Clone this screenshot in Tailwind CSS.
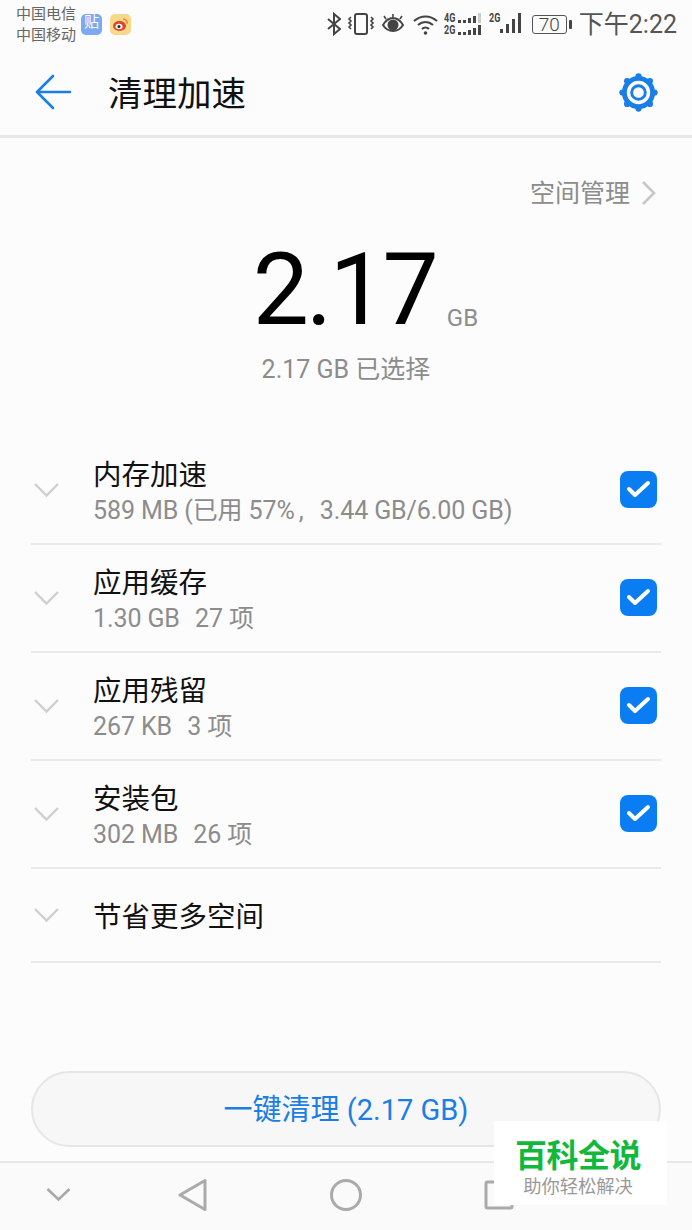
<!DOCTYPE html>
<html lang="zh-CN">
<head>
    <meta charset="UTF-8">
    <meta name="viewport" content="width=device-width, initial-scale=1.0">
    <title>清理加速</title>
    <script src="https://cdn.jsdelivr.net/npm/@tailwindcss/browser@4"></script>
</head>
<body class="bg-[#fcfcfc] font-['Roboto','Noto_Sans_CJK_SC',sans-serif]">
<div class="relative w-[692px] h-[1230px] overflow-hidden flex flex-col">

    <!-- Status bar -->
    <div class="h-[48px] flex items-center pl-[16px] pr-[15px] text-[#555]">
        <div class="text-[15px] leading-[21px] text-[#666] w-[61px] whitespace-nowrap mt-[2px]">
            <div>中国电信</div>
            <div>中国移动</div>
        </div>
        <div class="ml-[4px] w-[21px] h-[21px] rounded-[5px] bg-[#7ba9f2] flex items-center justify-center text-white text-[15px] leading-none pb-[3px]">贴</div>
        <div class="ml-[8px] w-[21px] h-[21px] rounded-[5px] bg-[#f8d98a] flex items-center justify-center">
            <svg width="17" height="15" viewBox="0 0 17 15"><ellipse cx="7.5" cy="9" rx="6.5" ry="5" fill="#e0432e"/><ellipse cx="7" cy="9.5" rx="3.5" ry="2.8" fill="#fff"/><circle cx="7" cy="9.5" r="1.5" fill="#222"/><path d="M11 2a4 4 0 0 1 4 5" fill="none" stroke="#e98a2e" stroke-width="1.5"/></svg>
        </div>
        <div class="ml-auto flex items-center">
            <svg width="14" height="24" viewBox="0 0 14 24" fill="none" stroke="#444" stroke-width="2"><path d="M1 7l12 10-6 5V2l6 5L1 17"/></svg>
            <svg class="ml-[4px]" width="31" height="24" viewBox="0 0 31 24" fill="none" stroke="#444" stroke-width="2"><rect x="10" y="2" width="12" height="20" rx="2"/><path d="M6 5L4 7l2 2-2 2 2 2-2 2 2 2M26 5l2 2-2 2 2 2-2 2 2 2-2 2" stroke-width="1.6"/></svg>
            <svg class="ml-[5px]" width="24" height="24" viewBox="0 0 24 24" fill="none" stroke="#444" stroke-width="2"><path d="M2 13c3-5 6-7 10-7s7 2 10 7c-3 5-6 6-10 6s-7-1-10-6z"/><circle cx="12" cy="13" r="4.5" fill="#444"/><path d="M5 7L3 4M12 5V2M19 7l2-3" stroke-width="1.6"/></svg>
            <svg class="ml-[8px]" width="25" height="22" viewBox="0 0 25 22" fill="none" stroke="#444" stroke-width="2.2"><path d="M1 8c7-6 16-6 23 0M5 12c4.500-4 10.500-4 15 0M9 16c2-2 5-2 7 0"/><circle cx="12.500" cy="20" r="1.800" fill="#444" stroke="none"/></svg>
            <div class="ml-[6px] flex flex-col gap-[2px] text-[12px] leading-[10px] font-bold text-[#444] w-[38px]">
                <div class="flex items-center"><span class="scale-x-75 origin-left w-[12px]">4G</span><svg class="ml-[2px]" width="24" height="10" viewBox="0 0 24 10" fill="#444"><rect x="0" y="7" width="3" height="3"/><rect x="5" y="7" width="3" height="3"/><rect x="10" y="5" width="3" height="5"/><rect x="15" y="3" width="3" height="7"/><rect x="20" y="0" width="3" height="10" fill="#ccc"/></svg></div>
                <div class="flex items-center"><span class="scale-x-75 origin-left w-[12px]">2G</span><svg class="ml-[2px]" width="24" height="10" viewBox="0 0 24 10" fill="#444"><rect x="0" y="7" width="3" height="3"/><rect x="5" y="7" width="3" height="3"/><rect x="10" y="5" width="3" height="5"/><rect x="15" y="3" width="3" height="7"/><rect x="20" y="0" width="3" height="10"/></svg></div>
            </div>
            <div class="ml-[7px] relative w-[34px] h-[24px]">
                <span class="absolute left-0 top-[1px] scale-x-75 origin-left text-[12px] leading-[10px] font-bold text-[#444]">2G</span>
                <svg class="absolute left-[11px] top-[1px]" width="23" height="21" viewBox="0 0 23 21" fill="#444"><rect x="0" y="16" width="3" height="4"/><rect x="6" y="11" width="3" height="9"/><rect x="12" y="6" width="3" height="14"/><rect x="18" y="0" width="3" height="20"/></svg>
            </div>
            <div class="ml-[9px] flex items-center">
                <div class="w-[35px] h-[19px] border border-[#555] rounded-[3px] flex items-center justify-center text-[19px] leading-none text-[#444] font-light">70</div>
                <div class="ml-[2px] w-[3px] h-[9px] bg-[#444] rounded-[1px]"></div>
            </div>
            <div class="ml-[7px] text-[25px] leading-none text-[#555]">下午2:22</div>
        </div>
    </div>

    <!-- Action bar -->
    <div class="h-[90px] flex items-center border-b-[3px] border-[#e8e8e8] pl-[35px] pr-[34px]">
        <svg width="37" height="36" viewBox="0 0 37 36" fill="none" stroke="#1a7ee6" stroke-width="2.6" stroke-linecap="round" stroke-linejoin="round"><path d="M35 18H2M18 2L2 18l16 16"/></svg>
        <h1 class="ml-[36px] text-[34.5px] leading-none font-normal text-[#111] mt-[5px]">清理加速</h1>
        <svg class="ml-auto mt-[1px]" width="39" height="39" viewBox="0 0 40 40" fill="none"><circle cx="20" cy="20" r="14.500" stroke="#1a7ee6" stroke-width="5"/><circle cx="20" cy="20" r="7" stroke="#1a7ee6" stroke-width="3"/><g fill="#1a7ee6"><circle cx="20" cy="3.500" r="3.200"/><circle cx="20" cy="36.500" r="3.200"/><circle cx="3.500" cy="20" r="3.200"/><circle cx="36.500" cy="20" r="3.200"/><circle cx="8.300" cy="8.300" r="3.200"/><circle cx="31.700" cy="8.300" r="3.200"/><circle cx="8.300" cy="31.700" r="3.200"/><circle cx="31.700" cy="31.700" r="3.200"/></g></svg>
    </div>

    <!-- Storage link -->
    <div class="mt-[38px] h-[34px] flex items-center justify-end pr-[35px] text-[25px] leading-none text-[#8c8c8c]">
        <span>空间管理</span>
        <svg class="ml-[11px]" width="16" height="26" viewBox="0 0 16 26" fill="none" stroke="#c8c8c8" stroke-width="2.600"><path d="M2 2l11 11L2 24"/></svg>
    </div>

    <!-- Total -->
    <div class="mt-[22px] flex items-end justify-center h-[116px] pl-[39px]">
        <span class="text-[100px] leading-[116px] text-black tracking-[-3px]">2.17</span>
        <span class="ml-[11px] mb-[16px] text-[24px] leading-[28px] text-[#8c8c8c]">GB</span>
    </div>
    <div class="mt-[6px] text-center text-[25px] leading-[32px] text-[#8c8c8c]">2.17 GB 已选择</div>

    <!-- Items -->
    <div class="mt-[51px] mx-[31px]">
        <div class="h-[108px] flex items-center border-b-2 border-[#eaeaea]">
            <svg class="ml-[3px] -mt-[1px]" width="25" height="16" viewBox="0 0 25 16" fill="none" stroke="#cfcfcf" stroke-width="2.400"><path d="M1 2l11.500 11.500L24 2"/></svg>
            <div class="ml-[34px] mt-[6px] -mr-[2px]">
                <div class="text-[28.5px] leading-[36px] text-[#111]">内存加速</div>
                <div class="text-[25px] leading-[34px] text-[#8c8c8c] whitespace-nowrap tracking-[-0.1px]">589 MB (已用 57%<span class="inline-block w-[25px] pl-[4px]">,</span>3.44 GB/6.00 GB)</div>
            </div>
            <div class="ml-auto mr-[4px] -mt-[2px] w-[37px] h-[37px] rounded-[8px] bg-[#0b7df2] flex items-center justify-center">
                <svg width="25" height="20" viewBox="0 0 25 20" fill="none" stroke="#fff" stroke-width="4" stroke-linecap="round" stroke-linejoin="round"><path d="M3 10l6 6L22 4"/></svg>
            </div>
        </div>
        <div class="h-[108px] flex items-center border-b-2 border-[#eaeaea]">
            <svg class="ml-[3px] -mt-[1px]" width="25" height="16" viewBox="0 0 25 16" fill="none" stroke="#cfcfcf" stroke-width="2.400"><path d="M1 2l11.500 11.500L24 2"/></svg>
            <div class="ml-[34px] mt-[6px]">
                <div class="text-[28.5px] leading-[36px] text-[#111]">应用缓存</div>
                <div class="text-[25px] leading-[34px] text-[#8c8c8c] whitespace-pre tracking-[-0.1px]">1.30 GB  <span class="ml-[3px]">27 项</span></div>
            </div>
            <div class="ml-auto mr-[4px] -mt-[2px] w-[37px] h-[37px] rounded-[8px] bg-[#0b7df2] flex items-center justify-center">
                <svg width="25" height="20" viewBox="0 0 25 20" fill="none" stroke="#fff" stroke-width="4" stroke-linecap="round" stroke-linejoin="round"><path d="M3 10l6 6L22 4"/></svg>
            </div>
        </div>
        <div class="h-[108px] flex items-center border-b-2 border-[#eaeaea]">
            <svg class="ml-[3px] -mt-[1px]" width="25" height="16" viewBox="0 0 25 16" fill="none" stroke="#cfcfcf" stroke-width="2.400"><path d="M1 2l11.500 11.500L24 2"/></svg>
            <div class="ml-[34px] mt-[6px]">
                <div class="text-[28.5px] leading-[36px] text-[#111]">应用残留</div>
                <div class="text-[25px] leading-[34px] text-[#8c8c8c] whitespace-pre tracking-[-0.1px]">267 KB  <span class="ml-[3px]">3 项</span></div>
            </div>
            <div class="ml-auto mr-[4px] -mt-[2px] w-[37px] h-[37px] rounded-[8px] bg-[#0b7df2] flex items-center justify-center">
                <svg width="25" height="20" viewBox="0 0 25 20" fill="none" stroke="#fff" stroke-width="4" stroke-linecap="round" stroke-linejoin="round"><path d="M3 10l6 6L22 4"/></svg>
            </div>
        </div>
        <div class="h-[108px] flex items-center border-b-2 border-[#eaeaea]">
            <svg class="ml-[3px] -mt-[1px]" width="25" height="16" viewBox="0 0 25 16" fill="none" stroke="#cfcfcf" stroke-width="2.400"><path d="M1 2l11.500 11.500L24 2"/></svg>
            <div class="ml-[34px] mt-[6px]">
                <div class="text-[28.5px] leading-[36px] text-[#111]">安装包</div>
                <div class="text-[25px] leading-[34px] text-[#8c8c8c] whitespace-pre tracking-[-0.1px]">302 MB  <span class="ml-[3px]">26 项</span></div>
            </div>
            <div class="ml-auto mr-[4px] -mt-[2px] w-[37px] h-[37px] rounded-[8px] bg-[#0b7df2] flex items-center justify-center">
                <svg width="25" height="20" viewBox="0 0 25 20" fill="none" stroke="#fff" stroke-width="4" stroke-linecap="round" stroke-linejoin="round"><path d="M3 10l6 6L22 4"/></svg>
            </div>
        </div>
        <div class="h-[94px] flex items-center border-b-2 border-[#eaeaea]">
            <svg class="ml-[3px]" width="25" height="16" viewBox="0 0 25 16" fill="none" stroke="#cfcfcf" stroke-width="2.400"><path d="M1 2l11.500 11.500L24 2"/></svg>
            <div class="ml-[34px] mt-[6px] text-[28.5px] leading-[36px] text-[#111]">节省更多空间</div>
        </div>
    </div>

    <!-- Clean button -->
    <div class="mt-auto mx-[31px] h-[76px] rounded-full bg-[#f7f7f7] border-2 border-[#e6e6e6] flex items-center justify-center text-[29px] leading-none text-[#1a7ee6] pt-[2px]">一键清理 (2.17 GB)</div>

    <!-- Nav bar -->
    <div class="mt-[14px] h-[69px] border-t-2 border-[#e8e8e8] bg-[#fafafa] relative flex items-center pb-[4px]">
        <svg class="ml-[46px]" width="25" height="15" viewBox="0 0 25 15" fill="none" stroke="#a8a8a8" stroke-width="2.600"><path d="M1.500 2L12.500 12.500 23.500 2"/></svg>
        <svg class="ml-[107px]" width="30" height="34" viewBox="0 0 30 34" fill="none" stroke="#aaa" stroke-width="3" stroke-linejoin="round"><path d="M27 2.500v29L2 17z"/></svg>
        <svg class="ml-[121px]" width="34" height="34" viewBox="0 0 34 34" fill="none" stroke="#aaa" stroke-width="3"><circle cx="17" cy="17" r="14.500"/></svg>
        <svg class="ml-[121px]" width="30" height="30" viewBox="0 0 30 30" fill="none" stroke="#aaa" stroke-width="3" stroke-linejoin="round"><rect x="2" y="2" width="26" height="26" rx="1.500"/></svg>
    </div>

    <!-- Watermark -->
    <div class="absolute left-[494px] top-[1121px] w-[173px] h-[84px] bg-white flex flex-col items-center pr-[5px]">
        <div class="mt-[17px] text-[32px] leading-[36px] font-bold text-[#12b83c] tracking-[-0.5px] whitespace-nowrap">百科全说</div>
        <div class="mt-[1px] text-[18.3px] leading-[24px] text-[#999] whitespace-nowrap">助你轻松解决</div>
    </div>
</div>
</body>
</html>
